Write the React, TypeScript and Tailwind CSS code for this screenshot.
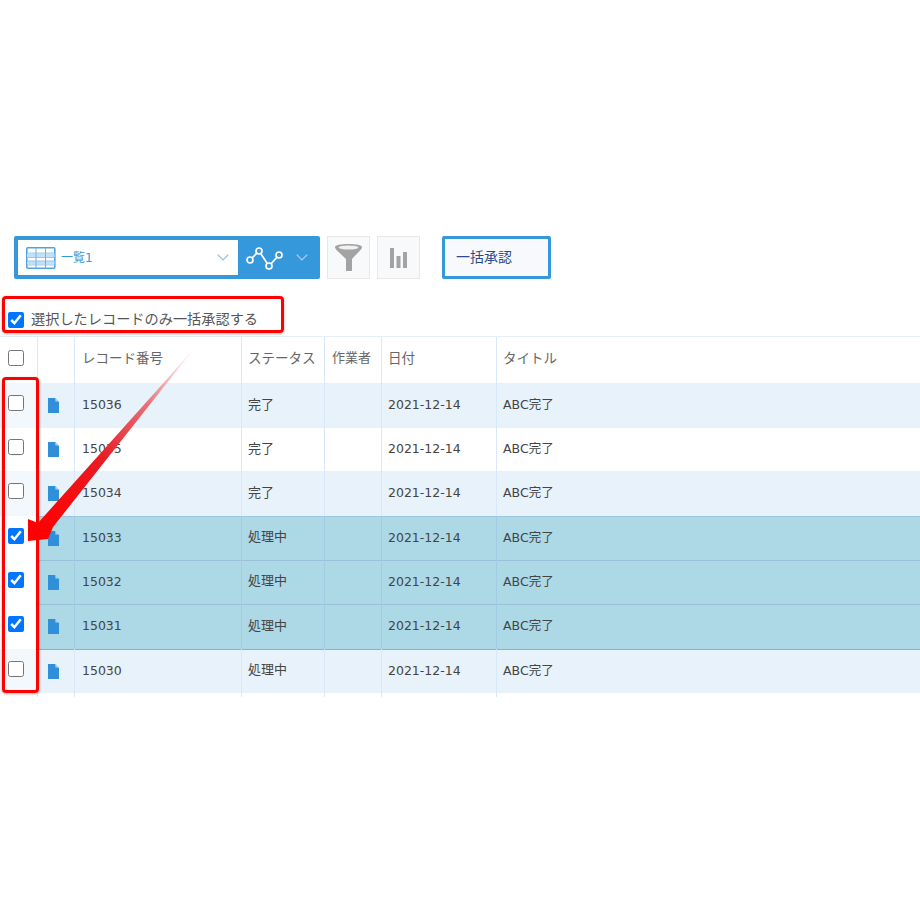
const FONT = "font-['DejaVu_Sans','Noto_Sans_CJK_JP',sans-serif]";

const rows = [
  { id: 15036, status: "完了", tone: "blue", h: "h-[45px]", line: "" },
  { id: 15035, status: "完了", tone: "white", h: "h-[43px]", line: "" },
  { id: 15034, status: "完了", tone: "blue", h: "h-[45px]", line: "" },
  { id: 15033, status: "処理中", tone: "selected", h: "h-[44px]", line: "shadow-[inset_0_1px_0_#9cc4dc]" },
  { id: 15032, status: "処理中", tone: "selected", h: "h-[44px]", line: "shadow-[inset_0_1px_0_#9cc0da]" },
  { id: 15031, status: "処理中", tone: "selected", h: "h-[45px]", line: "shadow-[inset_0_1px_0_#9cc0da]" },
  { id: 15030, status: "処理中", tone: "blue", h: "h-[44px]", line: "shadow-[inset_0_1px_0_#a3a3d0]" },
];

const cols = ["w-[38px]", "w-[37px]", "w-[167px]", "w-[83px]", "w-[57px]", "w-[115px]", "w-[423px]"];

function TableIcon() {
  return (
    <svg width="30" height="22" viewBox="0 0 30 22" fill="none">
      <rect x="0.8" y="0.8" width="28" height="20.400" rx="1" fill="#fff" stroke="#4ea3e0" strokeWidth="1.6" />
      <path d="M1 6.500h27.500v3.500H1zM1 14h27.500v3.500H1z" fill="#c4e0f6" />
      <path d="M1 6h27.500M1 10.500h27.500M1 14h27.500M1 18h27.500" stroke="#8cc4ec" strokeWidth="0.9" />
      <path d="M10 1v20M19.500 1v20" stroke="#6cb4e6" strokeWidth="1" />
    </svg>
  );
}

function GraphIcon() {
  return (
    <svg width="37" height="26" viewBox="0 0 37 26" fill="none" stroke="#fff" strokeWidth="1.700">
      <path d="M4 15 13 6l10 15 10-11" />
      <circle cx="4" cy="15" r="3" fill="#3498db" />
      <circle cx="13" cy="6" r="3" fill="#3498db" />
      <circle cx="23" cy="21" r="3" fill="#3498db" />
      <circle cx="33" cy="10" r="3" fill="#3498db" />
    </svg>
  );
}

function Chevron({ color }: { color: string }) {
  return (
    <svg width="12" height="7" viewBox="0 0 12 7" fill="none" stroke={color} strokeWidth="1.2">
      <path d="M0.7 0.7 6 6l5.3-5.3" />
    </svg>
  );
}

function DocIcon() {
  return (
    <svg width="11" height="15" viewBox="0 0 11 15">
      <path d="M0 0h7l4 4v11H0z" fill="#2f8fd8" />
      <path d="M7.400 0 11 3.600H7.400z" fill="#a9d2f0" />
    </svg>
  );
}

function Cell({ className, children }: { className: string; children?: React.ReactNode }) {
  return <div className={`flex shrink-0 items-center border-r ${className}`}>{children}</div>;
}

export default function App() {
  return (
    <div className={`relative h-[920px] w-[920px] overflow-hidden bg-white pt-[236px] ${FONT}`}>
      {/* toolbar */}
      <div className="flex h-[43px] items-stretch pl-[14px]">
        <div className="flex w-[306px] rounded-[2px] bg-[#3498db] p-1">
          <div className="flex w-[220px] items-center bg-white pl-2 pr-[9px]">
            <TableIcon />
            <span className="ml-[5px] flex-1 text-[12px] text-[#3498db]">一覧1</span>
            <Chevron color="#8cc0e6" />
          </div>
          <div className="flex flex-1 items-center pl-[8px]">
            <GraphIcon />
            <div className="ml-[13px]">
              <Chevron color="#a8d2f0" />
            </div>
          </div>
        </div>
        <div className="ml-[7px] flex w-[43px] items-center justify-center border border-[#e8e8e8] bg-[#f7f9fa]">
          <svg width="27" height="27" viewBox="0 0 27 27">
            <path d="M0 3c0-2 6-3 13.500-3S27 1 27 3c0 1-.5 2-1.500 3L17 15v12h-6V15L1.500 6C.5 5 0 4 0 3z" fill="#a3a3a3" />
            <ellipse cx="13.500" cy="3.500" rx="10" ry="2" fill="#f0f0f0" />
          </svg>
        </div>
        <div className="ml-[7px] flex w-[43px] items-center justify-center border border-[#e8e8e8] bg-[#f7f9fa]">
          <svg width="17" height="20" viewBox="0 0 17 20" fill="#a3a3a3">
            <path d="M0 0h4v20H0zM6.500 8h4v12h-4zM13 4h4v16h-4z" />
          </svg>
        </div>
        <div className="ml-[22px] flex w-[109px] items-center rounded-[2px] border-[3px] border-[#3498db] bg-[#f7f9fc] pl-[11px] text-[14px] text-[#2a4b8d]">
          一括承認
        </div>
      </div>

      {/* select-only option */}
      <label className="flex h-[57px] items-center pl-2 pt-[24px] text-[14.200px] text-[#555]">
        <input type="checkbox" defaultChecked className="h-4 w-4" />
        <span className="ml-[7px]">選択したレコードのみ一括承認する</span>
      </label>

      {/* record table */}
      <div className="flex flex-col text-[#444]">
        <div className="flex h-[47px] border-t border-[#e4eef8] text-[13.500px] text-[#666]">
          <Cell className={`${cols[0]} justify-center border-[#d8e8f8] pb-[5px] pr-[5px]`}>
            <input type="checkbox" className="h-4 w-4" />
          </Cell>
          <Cell className={`${cols[1]} border-[#d8e8f8]`} />
          <Cell className={`${cols[2]} border-[#d8e8f8] pb-[4px] pl-[7px]`}>レコード番号</Cell>
          <Cell className={`${cols[3]} border-[#d8e8f8] pb-[4px] pl-[6px]`}>ステータス</Cell>
          <Cell className={`${cols[4]} border-[#d8e8f8] pb-[4px] pl-[7px] text-[13px]`}>作業者</Cell>
          <Cell className={`${cols[5]} border-[#d8e8f8] pb-[4px] pl-[6px]`}>日付</Cell>
          <div className="flex items-center pb-[4px] pl-[6px]">タイトル</div>
        </div>
        {rows.map((r) => {
          const selected = r.tone === "selected";
          const bg = selected ? "bg-[#add8e6]" : r.tone === "blue" ? "bg-[#e7f2fb]" : "bg-white";
          const line = selected ? "border-[#a2cce4]" : "border-[#d8e8f8]";
          return (
            <div key={r.id} className={`flex text-[12.500px] ${r.h} ${bg} ${r.line}`}>
              <Cell className={`${cols[0]} justify-center pb-[5px] pr-[5px] ${line} ${r.tone === "white" || selected ? "bg-white" : "bg-[#f3f8fc]"}`}>
                <input type="checkbox" defaultChecked={selected} className="h-4 w-4" />
              </Cell>
              <Cell className={`${cols[1]} pl-[10px] ${line}`}>
                <DocIcon />
              </Cell>
              <Cell className={`${cols[2]} pl-[7px] ${line}`}>{r.id}</Cell>
              <Cell className={`${cols[3]} pb-[2px] pl-[6px] text-[13px] ${line}`}>{r.status}</Cell>
              <Cell className={`${cols[4]} ${line}`} />
              <Cell className={`${cols[5]} pl-[6px] ${line}`}>2021-12-14</Cell>
              <div className="flex items-center pl-[6px]">ABC完了</div>
            </div>
          );
        })}
        <div className="flex h-1">
          {cols.slice(0, 6).map((c, i) => (
            <Cell key={i} className={`${c} border-[#d8e8f8]`} />
          ))}
        </div>
      </div>

      {/* annotations */}
      <div className="absolute left-[2px] top-[296px] h-[37px] w-[282px] rounded-[4px] border-[3px] border-[#f00] shadow-[0_1px_3px_rgba(0,0,0,0.3)]" />
      <div className="absolute left-[2px] top-[377px] h-[316px] w-[37px] rounded-[4px] border-[3px] border-[#f00] shadow-[0_1px_3px_rgba(0,0,0,0.3)]" />
      <svg className="absolute left-0 top-0" width="920" height="920" viewBox="0 0 920 920" fill="none">
        <defs>
          <linearGradient id="arrowFade" gradientUnits="userSpaceOnUse" x1="40" y1="530" x2="193" y2="350">
            <stop offset="0" stopColor="#f00" />
            <stop offset="0.4" stopColor="#e81c24" />
            <stop offset="0.7" stopColor="#e87078" />
            <stop offset="1" stopColor="#f4c8ca" stopOpacity="0.3" />
          </linearGradient>
        </defs>
        <polygon points="193,350 53,527 48,539 28,541 28,519 38,523" fill="url(#arrowFade)" />
      </svg>
    </div>
  );
}
